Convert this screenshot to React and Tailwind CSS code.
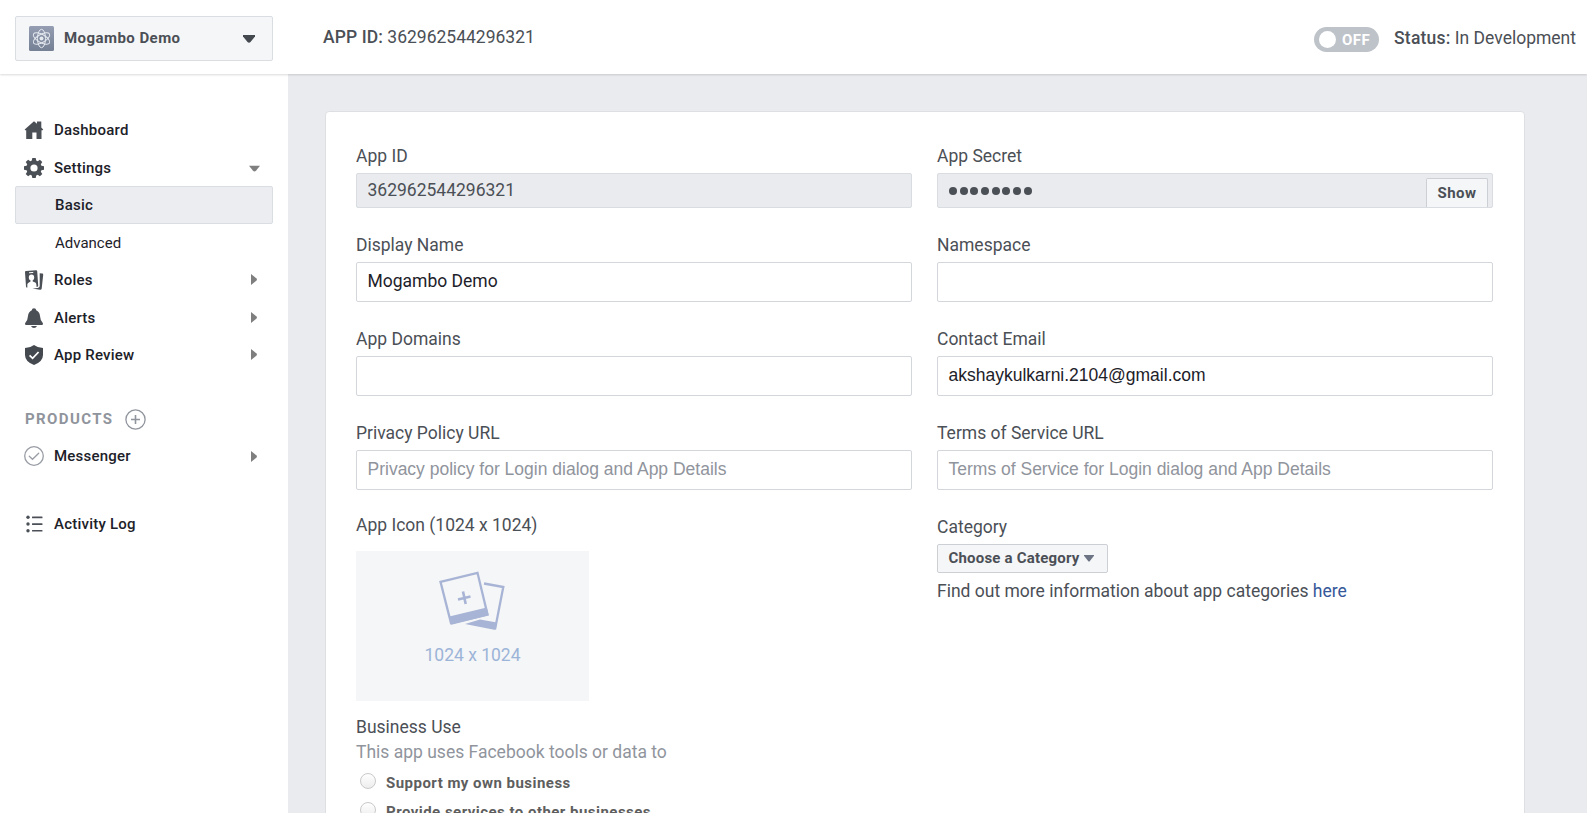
const Caret = ({ down, className }) => (
  <svg width="11" height="11" viewBox="0 0 11 11" className={className}>
    <path d={down ? "M0 2.7h11L7 7.7Q5.5 9.2 4 7.7z" : "M2 0v11L7.3 6.7Q8.6 5.5 7.3 4.3z"} fill="currentColor" />
  </svg>
);

const icons = {
  home: (
    <path d="M0.7 9.6 10 1.2l3 2.6V1.5h4.3v6l1.9 2.1-.6.7h-1.1V19h-5v-6.5H8.3V19H2.2v-8.7H1.1z" fill="#4b4f56" />
  ),
  gear: (
    <path
      fillRule="evenodd"
      fill="#4b4f56"
      d="M8.3 0h3.4l.5 2.6 1.5.6L15.9 1.7l2.4 2.4-1.5 2.2.6 1.5 2.6.5v3.4l-2.6.5-.6 1.5 1.5 2.2-2.4 2.4-2.2-1.5-1.5.6-.5 2.6H8.3l-.5-2.6-1.5-.6-2.2 1.5-2.4-2.4 1.5-2.2-.6-1.5L0 11.7V8.3l2.6-.5.6-1.5L1.7 4.1l2.4-2.4 2.2 1.5 1.5-.6zM10 6.4a3.6 3.6 0 1 0 0 7.2 3.6 3.6 0 0 0 0-7.2z"
    />
  ),
  roles: (
    <>
      <path d="M1 2.2Q.9 1.1 2 1L12 .2q1.1-.1 1.2 1l1 14.6q0 .8-.8.9l-10 .9q-1.3.1-1.4-1.2z" fill="#4b4f56" />
      <path d="M5 2.8l4.3-.4" stroke="#fff" strokeWidth="1" />
      <ellipse cx="7.5" cy="7.4" rx="2.7" ry="2.9" fill="#fff" />
      <path d="M3.4 18.5 3.300 14.400Q3.400 13 5.300 12.200L6.500 11.600V10h2.200v1.500l1.400.5q2 .6 2.200 2l.3 4z" fill="#fff" />
      <path d="M15.7 3.300l2.600.3q1 .1.900 1.100L17.700 18.400q-.2 1.500-1.700 1.300L8.500 18.600l5.300-.6q1.900-.2 1.900-1.900z" fill="#4b4f56" />
    </>
  ),
  bell: (
    <g fill="#4b4f56">
      <path d="M7.8 2.2Q7.9.2 10 .2t2.2 2Q15.6 3.6 16 8q.4 4.5 2.3 6.2.8 1 .7 1.8 0 1-1.2 1H2.2Q1 17 1 16q-.1-.8.7-1.8Q3.6 12.5 4 8q.4-4.4 3.8-5.8z" />
      <path d="M7 18h6q-1 1.9-3 1.9T7 18z" />
    </g>
  ),
  shield: (
    <>
      <path d="M10 0Q13.5 2.8 19 3v7q0 6.500-9 10Q1 16.500 1 10V3Q6.500 2.800 10 0z" fill="#444950" />
      <path d="M5.600 10.300l3 3 6-6.300" fill="none" stroke="#fff" strokeWidth="1.8" />
    </>
  ),
  check: (
    <g fill="none" stroke="#999da5" strokeWidth="1.3">
      <circle cx="10" cy="10" r="9.3" />
      <path d="M5.3 10.3l3.2 3 6.2-6" strokeLinecap="round" />
    </g>
  ),
  list: (
    <g fill="#4b4f56">
      <circle cx="4" cy="3.3" r="1.7" />
      <circle cx="4" cy="10" r="1.7" />
      <circle cx="4" cy="16.7" r="1.7" />
      <rect x="8" y="2.5" width="10.5" height="1.7" rx=".5" />
      <rect x="8" y="9.2" width="10.5" height="1.7" rx=".5" />
      <rect x="8" y="15.9" width="10.5" height="1.7" rx=".5" />
    </g>
  ),
};

const Icon = ({ name }) => (
  <svg width="20" height="20" viewBox="0 0 20 20" className="shrink-0">
    {icons[name]}
  </svg>
);

const NavItem = ({ icon, label, caret, down }) => (
  <a className="flex h-[37.5px] items-center pr-7 pl-6">
    <Icon name={icon} />
    <span className="ml-[10px] flex-1 text-[15px] font-medium tracking-[0.22px] text-[#1d2129]">{label}</span>
    {caret && <Caret down={down} className={down ? "mr-[0.5px] text-[#7f7f7f]" : "text-[#7f7f7f]"} />}
  </a>
);

const Field = ({ label, value, placeholder, arial }) => (
  <div className="h-[94px]">
    <label className="block h-[28px] text-[17.5px] leading-[22px] text-[#4b4f56]">{label}</label>
    <div
      className={`flex h-10 items-center rounded-xs border border-[#d3d6db] px-[10.5px] pb-px text-[17.5px] ${
        arial || placeholder ? "font-['Liberation_Sans',Arial,sans-serif]" : ""
      } ${placeholder ? "text-[#90949c]" : "text-[#1d2129]"}`}
    >
      {placeholder || value}
    </div>
  </div>
);

const Radio = ({ label }) => (
  <div className="flex h-[29px] items-center">
    <span className="mr-[10px] -mt-1.5 ml-1 size-4 rounded-full border border-[#c9c9c9] bg-linear-to-b from-white to-[#ededed]" />
    <span className="text-[15px] font-bold tracking-[0.47px] text-[#5e5e5e]">{label}</span>
  </div>
);

export default function App() {
  return (
    <div className="flex h-[813px] w-[1587px] flex-col overflow-hidden bg-[#e9ebee] font-[Roboto,sans-serif] text-[#4b4f56]">
      <header className="z-10 flex h-[74px] shrink-0 bg-white shadow-[0_1px_2px_rgba(0,0,0,0.15)]">
        <div className="mt-4 ml-[15px] flex h-[45px] w-[258px] items-center rounded-xs border border-[#dadde1] bg-[#f5f6f7] pr-[17px] pl-[13px]">
          <svg width="25" height="25" viewBox="0 0 25 25">
            <defs>
              <linearGradient id="badge" x1="0" y1="0" x2="0" y2="1">
                <stop offset="0" stopColor="#949db2" />
                <stop offset="1" stopColor="#758094" />
              </linearGradient>
            </defs>
            <rect width="25" height="25" rx="1.5" fill="url(#badge)" />
            <g fill="none" stroke="#e4e8ef" strokeWidth="1">
              <ellipse cx="12.5" cy="12.5" rx="4" ry="9.2" />
              <ellipse cx="12.5" cy="12.5" rx="4" ry="9.2" transform="rotate(60 12.5 12.5)" />
              <ellipse cx="12.5" cy="12.5" rx="4" ry="9.2" transform="rotate(120 12.5 12.5)" />
            </g>
            <circle cx="12.5" cy="12.5" r="2" fill="#e4e8ef" />
          </svg>
          <span className="ml-[10px] flex-1 text-[15px] font-bold tracking-[0.45px]">Mogambo Demo</span>
          <svg width="12" height="8" viewBox="0 0 12 8">
            <path d="M0 0h12v1.5L7.5 7q-1.5 1.5-3 0L0 1.5z" fill="#444950" />
          </svg>
        </div>
        <div className="mt-[26px] ml-[50px] text-[17.5px] leading-[22px]">
          <span className="font-medium tracking-[0.1px]">APP ID:</span> 362962544296321
        </div>
        <div className="mt-[27px] ml-auto flex h-[25px] w-[65px] items-center rounded-full bg-[#bec3c9] pl-[5px]">
          <span className="size-[17px] rounded-full bg-white" />
          <span className="mt-px ml-[6px] text-[15px] font-bold tracking-[0.4px] text-white">OFF</span>
        </div>
        <div className="mt-[27px] mr-[11px] ml-[15px] text-[17.5px] leading-[22px]">
          <span className="font-medium tracking-[0.2px]">Status:</span> In Development
        </div>
      </header>

      <div className="flex flex-1">
        <nav className="w-[288px] shrink-0 bg-white pt-[37px]">
          <NavItem icon="home" label="Dashboard" />
          <div className="-mb-px pt-px">
            <NavItem icon="gear" label="Settings" caret down />
          </div>
          <div className="mx-[15px] flex h-[38px] w-[258px] items-center rounded-xs border border-[#dadde1] bg-[#ebedf0] pl-[39px] text-[15px] font-medium tracking-[0.22px] text-[#1d2129]">
            Basic
          </div>
          <div className="mt-px flex h-9 items-center pl-[55px] text-[15px] text-[#1d2129]">Advanced</div>
          <NavItem icon="roles" label="Roles" caret />
          <div className="-mb-[0.5px] pt-[0.5px]">
            <NavItem icon="bell" label="Alerts" caret />
          </div>
          <NavItem icon="shield" label="App Review" caret />
          <div className="mt-[27px] -mb-px flex h-[38px] items-center pl-[25px]">
            <span className="text-[15px] font-bold tracking-[1.4px] text-[#90949c]">PRODUCTS</span>
            <svg width="21" height="21" viewBox="0 0 21 21" className="ml-[12px]">
              <g fill="none" stroke="#90949c" strokeWidth="1.3">
                <circle cx="10.5" cy="10.5" r="9.6" />
                <path d="M6 10.5h9M10.5 6v9" strokeWidth="1.6" />
              </g>
            </svg>
          </div>
          <NavItem icon="check" label="Messenger" caret />
          <div className="mt-[30px]">
            <NavItem icon="list" label="Activity Log" />
          </div>
        </nav>

        <main className="flex-1 pt-[37px] pl-[37px]">
          <section className="grid h-[760px] w-[1200px] grid-cols-[556px_556px] content-start gap-x-[25px] rounded border border-[#dddfe2] bg-white px-[30px] pt-[33px]">
            <div className="h-[89px]">
              <label className="block h-[28px] text-[17.5px] leading-[22px]">App ID</label>
              <div className="flex h-[35px] items-center rounded-xs border border-[#d9dce0] bg-[#e9ebee] px-[10.5px] text-[17.5px]">
                362962544296321
              </div>
            </div>
            <div className="h-[89px]">
              <label className="block h-[28px] text-[17.5px] leading-[22px]">App Secret</label>
              <div className="flex h-[35px] items-center justify-between overflow-hidden rounded-xs border border-[#d9dce0] bg-[#e9ebee] pr-1 pl-[11px]">
                <div className="flex gap-[2.7px]">
                  {[0, 1, 2, 3, 4, 5, 6, 7].map((i) => (
                    <span key={i} className="size-2 rounded-full bg-[#4b4f56]" />
                  ))}
                </div>
                <div className="mt-1 flex h-[29px] w-[62px] items-center justify-center rounded-t-xs border border-b-0 border-[#ccd0d5] bg-[#f5f6f7] text-[15px] font-bold tracking-[0.5px]">
                  Show
                </div>
              </div>
            </div>

            <Field label="Display Name" value="Mogambo Demo" />
            <Field label="Namespace" />
            <Field label="App Domains" />
            <Field label="Contact Email" value="akshaykulkarni.2104@gmail.com" arial />
            <Field label="Privacy Policy URL" placeholder="Privacy policy for Login dialog and App Details" />
            <Field label="Terms of Service URL" placeholder="Terms of Service for Login dialog and App Details" />

            <div className="-mt-[2px]">
              <div className="h-[37px] text-[17.5px] leading-[22px]">App Icon (1024 x 1024)</div>
              <div className="flex h-[150px] w-[233px] flex-col items-center bg-[#f5f6f7] pt-5">
                <svg width="66" height="60" viewBox="0 0 66 60" className="mr-[2px]">
                  <g fill="none" stroke="#a8b4d5" strokeWidth="2.3">
                    <path d="M1.500 10.800 38.500 1.800 48.500 43.500 12 52z" />
                    <path d="M45 12.500l19.300 3.500-8 41-13-2.500" />
                    <path d="M24 20.500l2.700 12.500M19 28.500l12.500-3" strokeWidth="2.6" />
                  </g>
                  <path d="M10.300 45.500 47.800 36.500l1.900 8L12.300 53.800zM26 53l15-4.500 17 3-1.500 7.500z" fill="#a8b4d5" />
                </svg>
                <div className="mt-[13px] text-[17.5px] leading-[22px] text-[#9cb4d8]">1024 x 1024</div>
              </div>
              <div className="mt-[15px] text-[17.5px] leading-[22px]">Business Use</div>
              <div className="mt-[3px] mb-[6px] text-[17.5px] leading-[22px] text-[#90949c]">
                This app uses Facebook tools or data to
              </div>
              <Radio label="Support my own business" />
              <Radio label="Provide services to other businesses" />
            </div>

            <div>
              <div className="h-[28px] text-[17.5px] leading-[22px]">Category</div>
              <div className="flex h-[29px] w-[171px] items-center rounded-xs border border-[#ccd0d5] bg-[#f5f6f7] pb-px pl-[10.5px] text-[15px] font-bold tracking-[0.2px]">
                Choose a Category
                <svg width="10" height="7" viewBox="0 0 10 7" className="ml-1">
                  <path d="M0 0h10v.8L5.5 6.5h-1L0 .8z" fill="#6d7484" />
                </svg>
              </div>
              <div className="mt-[7px] text-[17.5px] leading-[22px]">
                Find out more information about app categories <a className="text-[#365899]">here</a>
              </div>
            </div>
          </section>
        </main>
      </div>
    </div>
  );
}
